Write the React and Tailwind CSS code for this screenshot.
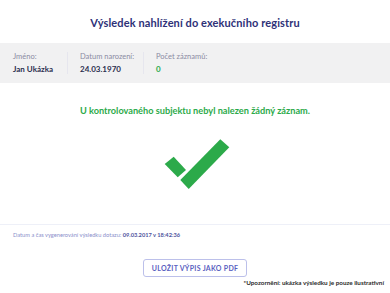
import React from 'react'

const fields = [
  { label: 'Jméno:', value: 'Jan Ukázka', w: 'w-[67px]' },
  { label: 'Datum narození:', value: '24.03.1970', w: 'w-[76px]' },
  { label: 'Počet záznamů:', value: '0', green: true },
]

const Check = () => (
  <svg width="66" height="52" viewBox="0 0 66 52" className="block">
    <polygon points="0.7,25 9.7,17.7 22,31 13.7,38.3" fill="#2caa4a" />
    <polygon points="16.3,41 56.3,0.3 65.3,8.3 24.7,50" fill="#2caa4a" />
  </svg>
)

const App = () => {
  return (
    <div className="w-[390px] h-[293px] bg-white overflow-hidden font-['Lato',sans-serif]">
      <h1 className="pt-[15px] h-[43px] text-center text-[11px] font-bold text-[#2e3177] tracking-[0.1px]">
        Výsledek nahlížení do exekučního registru
      </h1>
      <div className="h-[40px] bg-[#f1f1f2] flex items-center pl-[13px]">
        {fields.map((f, i) => (
          <div key={i} className={`flex items-center ${f.w || ''}`}>
            <div className="flex flex-col leading-none">
              <span className="text-[7.5px] text-[#8b8ba3]">{f.label}</span>
              <span className={`mt-[5px] text-[8px] font-bold ${f.green ? 'text-[#2caa4a]' : 'text-[#2b2f4f]'}`}>
                {f.value}
              </span>
            </div>
            {f.w && <div className="ml-auto mr-[12px] w-px h-[22px] bg-[#e6e6ee]" />}
          </div>
        ))}
      </div>
      <p className="mt-[23px] text-center text-[9.2px] font-bold text-[#2caa4a] leading-none">
        U kontrolovaného subjektu nebyl nalezen žádný záznam.
      </p>
      <div className="flex justify-center pt-[24px] h-[109px] pl-[4px]">
        <Check />
      </div>
      <div className="border-t border-[#eef0f8] pt-[7px] pl-[13px] text-[5.7px] text-[#8a8fcb] leading-none">
        Datum a čas vygenerování výsledku dotazu: <b className="text-[#4d529c]">09.03.2017 v 18:42:36</b>
      </div>
      <div className="flex justify-center mt-[21px]">
        <button className="h-[18px] px-[8px] border border-[#bcc0ea] rounded-[3px] text-[7px] font-bold tracking-[0.3px] text-[#5a61bf]">
          ULOŽIT VÝPIS JAKO PDF
        </button>
      </div>
      <div className="text-right pr-[6px] mt-[3px] text-[6.3px] font-bold text-[#2a2a2a] leading-none">
        *Upozornění: ukázka výsledku je pouze ilustrativní
      </div>
    </div>
  )
}

export default App
